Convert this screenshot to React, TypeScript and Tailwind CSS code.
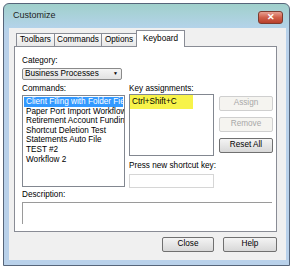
import React from 'react'

const commands = [
  'Client Filing with Folder Field',
  'Paper Port Import Workflow',
  'Retirement Account Funding',
  'Shortcut Deletion Test',
  'Statements Auto File',
  'TEST #2',
  'Workflow 2',
]

function Btn({ label, disabled, className = '' }: { label: string; disabled?: boolean; className?: string }) {
  return (
    <div
      className={
        'flex items-center justify-center rounded-[2px] border text-[8.2px] ' +
        (disabled
          ? 'border-[#cfcfcf] bg-[#f5f4f0] text-[#a8a8a8] '
          : 'border-[#707070] bg-[linear-gradient(#f4f4f4,#e6e6e6_50%,#d8d8d8)] text-black ') +
        className
      }
    >
      {label}
    </div>
  )
}

function Tab({ label, w, active }: { label: string; w: string; active?: boolean }) {
  if (active) {
    return (
      <div
        className={`relative z-10 -mb-px -ml-px flex h-[17px] items-start justify-center border border-b-0 border-[#898c95] bg-white pt-[2px] ${w}`}
      >
        {label}
      </div>
    )
  }
  return (
    <div
      className={`flex h-[13px] items-center justify-center border border-b-0 border-[#898c95] bg-[linear-gradient(#fbfbfb,#e8e8e8)] ${w}`}
    >
      {label}
    </div>
  )
}

export default function App() {
  return (
    <div
      className="h-[268px] w-[291px] whitespace-nowrap bg-white pl-[3px] pt-[3px] text-[8.2px] text-black"
      style={{ fontFamily: '"Liberation Sans", Arial, sans-serif' }}
    >
      <div className="flex h-[263px] w-[287px] flex-col rounded-t-[6px] border border-[#56657a] bg-[linear-gradient(#a0d0cb,#b4d3ea_24px,#b9d1ea_30px,#b9d1ea)]">
        {/* title bar */}
        <div className="flex h-[24px] items-center justify-between pl-[9px] pr-[6px]">
          <span className="text-[9px] text-[#1e1e1e]">Customize</span>
          <div className="mt-[3px] flex h-[13px] w-[25px] items-center justify-center rounded-[3px] border border-[#7d3b2e] bg-[linear-gradient(#e8a092,#d0604a_50%,#b8402c)] text-[9px] font-bold leading-none text-white">
            ✕
          </div>
        </div>

        {/* client area */}
        <div className="ml-[5px] mr-[3px] flex h-[232px] flex-col bg-[#f0f0f0]">
          {/* tabs */}
          <div className="flex h-[18px] items-end pl-[7px]">
            <Tab label="Toolbars" w="w-[39px]" />
            <Tab label="Commands" w="w-[48px] -ml-px" />
            <Tab label="Options" w="w-[36px] -ml-px" />
            <Tab label="Keyboard" w="w-[49px]" active />
          </div>

          {/* panel */}
          <div className="ml-[5px] mr-[9px] flex h-[186px] flex-col border border-[#898c95] bg-white pl-[7px] pt-[9px]">
            <div className="h-[10px] leading-[10px]">Category:</div>
            <div className="mt-[2px] flex h-[12px] w-[100px] items-center justify-between rounded-[2px] border border-[#8a8a8a] bg-[linear-gradient(#f5f5f5,#e2e2e2)] pl-[2px] pr-[3px]">
              <span>Business Processes</span>
              <span className="text-[5px]">▼</span>
            </div>

            <div className="mt-[4px] flex">
              {/* commands */}
              <div className="flex w-[103px] flex-col">
                <div className="h-[10px] leading-[10px]">Commands:</div>
                <div className="mt-px h-[92px] overflow-hidden border border-[#828790] p-px">
                  {commands.map((c, i) => (
                    <div
                      key={c}
                      className={
                        'h-[9.6px] pl-[2px] leading-[9.6px] ' +
                        (i === 0 ? 'bg-[#3399ff] text-white' : '')
                      }
                    >
                      {c}
                    </div>
                  ))}
                </div>
              </div>

              {/* key assignments */}
              <div className="ml-[4px] flex w-[85px] flex-col">
                <div className="h-[10px] leading-[10px]">Key assignments:</div>
                <div className="h-[62px] border border-[#828790]">
                  <div className="flex h-[14px] w-[63px] items-center bg-[#f7f34a] pl-[2px]">Ctrl+Shift+C</div>
                </div>
                <div className="mt-[5px] h-[10px] leading-[10px]">Press new shortcut key:</div>
                <div className="mt-[3px] h-[14px] border border-[#d6d6d6]" />
              </div>

              {/* buttons */}
              <div className="ml-[5px] flex w-[54px] flex-col gap-[6px] pt-[12px]">
                <Btn label="Assign" disabled className="h-[15px]" />
                <Btn label="Remove" disabled className="h-[15px]" />
                <Btn label="Reset All" className="h-[15px]" />
              </div>
            </div>

            <div className="mt-[2px] h-[10px] leading-[10px]">Description:</div>
            <div className="mt-[2px] h-[22px] w-[250px] border-l border-t border-[#9a9a9a]" />
          </div>

          {/* bottom buttons */}
          <div className="mr-[9px] mt-[5px] flex justify-end gap-[9px]">
            <Btn label="Close" className="h-[15px] w-[52px]" />
            <Btn label="Help" className="h-[15px] w-[54px]" />
          </div>
        </div>
      </div>
    </div>
  )
}
